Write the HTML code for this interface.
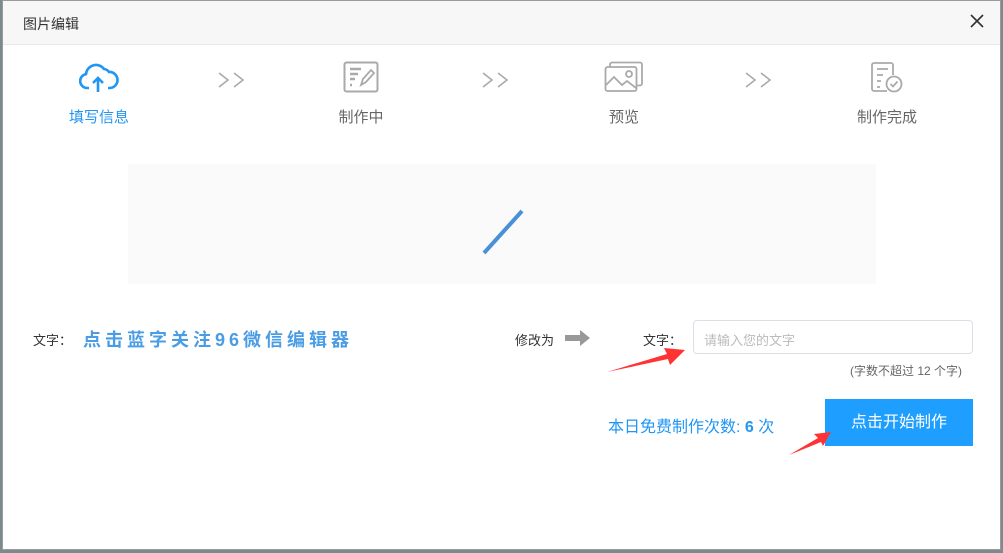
<!DOCTYPE html>
<html><head><meta charset="utf-8"><style>
*{margin:0;padding:0;box-sizing:border-box}
body{width:1003px;height:553px;overflow:hidden;background:#7a8a8f;font-family:"Liberation Sans","Noto Sans CJK SC",sans-serif;position:relative}
.dlg{position:absolute;left:2px;top:0;width:999px;height:550px;background:#fff;border:1px solid #9a9a9a}
.hd{height:44px;background:#f7f7f7;border-bottom:1px solid #e8e8e8;position:relative}
.hd .t{position:absolute;left:20px;top:13px;font-size:14px;color:#333}
.hd .x{position:absolute;left:966px;top:12px}
.step{position:absolute;top:60px;width:120px;text-align:center;font-size:15px;color:#666}
.step svg{display:block;margin:0 auto 13px}
.arr{position:absolute;top:70px}
.prev{position:absolute;left:125px;top:163px;width:748px;height:120px;background:#fafafa}
.abs{position:absolute;white-space:nowrap}
</style></head><body>
<div class="dlg">
<div class="hd"><div class="t">图片编辑</div>
<svg class="x" width="16" height="16" viewBox="0 0 16 16"><path d="M2 2L14 14M14 2L2 14" stroke="#333" stroke-width="1.6"/></svg></div>

<div class="step" style="left:36px;color:#2196f3">
<svg width="40" height="32" viewBox="0 0 40 32"><path d="M10 27H8a7 7 0 0 1-1-13.9A10 10 0 0 1 25 8a7 7 0 0 1 5 3 8 8 0 0 1 1 16h-2" fill="none" stroke="#2196f3" stroke-width="2.6"/><path d="M19 31V17M14 22l5-5 5 5" fill="none" stroke="#2196f3" stroke-width="2.6"/></svg>
填写信息</div>
<svg class="arr" style="left:214px" width="28" height="18" viewBox="0 0 28 18"><path d="M2 2l9 7-9 7M17 2l9 7-9 7" fill="none" stroke="#aaa" stroke-width="1.6"/></svg>
<div class="step" style="left:298px">
<svg width="36" height="32" viewBox="0 0 36 32"><rect x="1.5" y="1.5" width="33" height="29" rx="2" fill="none" stroke="#aaa" stroke-width="2"/><path d="M7 8h11M7 13h8M7 18h5M7 24h2" stroke="#aaa" stroke-width="2.5"/><path d="M18 24l2-6 8-9 3 3-8 9z" fill="none" stroke="#aaa" stroke-width="1.8"/></svg>
制作中</div>
<svg class="arr" style="left:478px" width="28" height="18" viewBox="0 0 28 18"><path d="M2 2l9 7-9 7M17 2l9 7-9 7" fill="none" stroke="#aaa" stroke-width="1.6"/></svg>
<div class="step" style="left:561px">
<svg width="40" height="32" viewBox="0 0 40 32"><rect x="6" y="1.5" width="32" height="23" rx="2" fill="none" stroke="#aaa" stroke-width="1.8"/><rect x="1.5" y="6" width="31" height="24" rx="2" fill="#fff" stroke="#aaa" stroke-width="1.8"/><path d="M2 24l8-8 8 8 5-4 9 7" fill="none" stroke="#aaa" stroke-width="1.8"/><circle cx="25" cy="13" r="3" fill="none" stroke="#aaa" stroke-width="1.8"/></svg>
预览</div>
<svg class="arr" style="left:741px" width="28" height="18" viewBox="0 0 28 18"><path d="M2 2l9 7-9 7M17 2l9 7-9 7" fill="none" stroke="#aaa" stroke-width="1.6"/></svg>
<div class="step" style="left:824px">
<svg width="34" height="32" viewBox="0 0 34 32"><path d="M17 30H4a2 2 0 0 1-2-2V4a2 2 0 0 1 2-2h17a2 2 0 0 1 2 2v10" fill="none" stroke="#aaa" stroke-width="1.8"/><path d="M7 8h11M7 14h6M7 20h4M7 26h3" stroke="#aaa" stroke-width="1.8"/><circle cx="24" cy="23" r="7.5" fill="#fff" stroke="#aaa" stroke-width="1.8"/><path d="M20.5 23l2.5 2.5 4.5-5" fill="none" stroke="#aaa" stroke-width="1.8"/></svg>
制作完成</div>

<div class="prev"></div>
<svg class="abs" style="left:478px;top:206px" width="44" height="50" viewBox="0 0 44 50"><path d="M3 46L41 4" stroke="#4a90d9" stroke-width="4"/></svg>

<div class="abs" style="left:30px;top:329px;font-size:13px;color:#333">文字：</div>
<div class="abs" style="left:80px;top:325px;font-size:18px;font-weight:bold;color:#4a9de4;letter-spacing:4px">点击蓝字关注96微信编辑器</div>
<div class="abs" style="left:512px;top:329px;font-size:13px;color:#333">修改为</div>
<svg class="abs" style="left:562px;top:329px" width="26" height="16" viewBox="0 0 26 16"><path d="M0 5h15V0l10 8-10 8v-5H0z" fill="#999"/></svg>
<div class="abs" style="left:640px;top:329px;font-size:13px;color:#333">文字：</div>
<div class="abs" style="left:690px;top:319px;width:280px;height:34px;border:1px solid #dcdfe6;border-radius:4px;font-size:13px;color:#bbb;padding:9px 10px">请输入您的文字</div>
<div class="abs" style="left:847px;top:361px;font-size:12px;color:#666">(字数不超过 12 个字)</div>
<div class="abs" style="left:605px;top:412px;font-size:16px;color:#2196f3">本日免费制作次数: <b>6</b> 次</div>
<div class="abs" style="left:822px;top:398px;width:148px;height:47px;background:#1e9fff;color:#fff;font-size:16px;text-align:center;line-height:47px">点击开始制作</div>
</div>
<svg class="abs" style="left:0;top:0" width="1003" height="553" viewBox="0 0 1003 553">
<path d="M607 372L667 354L664 348L685 350L670 365L668 359Z" fill="#f33"/>
<path d="M789 455L818 438L814 434L831 432L823 446L821 442Z" fill="#f33"/>
</svg>
</body></html>
